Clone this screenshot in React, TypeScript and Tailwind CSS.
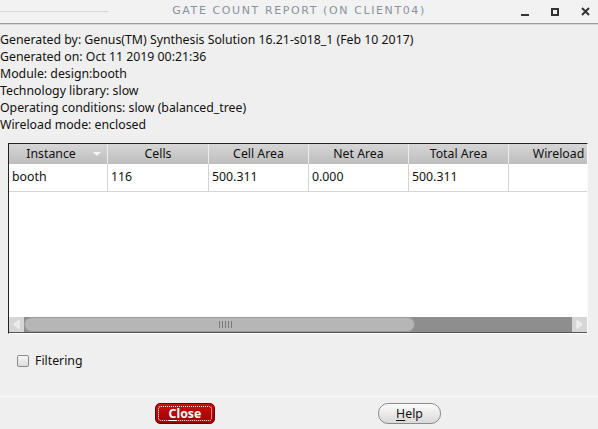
import React from "react";

// Gate count report dialog (Genus synthesis)
const info = [
  "Generated by: Genus(TM) Synthesis Solution 16.21-s018_1 (Feb 10 2017)",
  "Generated on: Oct 11 2019 00:21:36",
  "Module: design:booth",
  "Technology library: slow",
  "Operating conditions: slow (balanced_tree)",
  "Wireload mode: enclosed",
];

const columns = [
  { label: "Instance", w: "w-[99px]", sort: true },
  { label: "Cells", w: "w-[101px]" },
  { label: "Cell Area", w: "w-[100px]" },
  { label: "Net Area", w: "w-[100px]" },
  { label: "Total Area", w: "w-[100px]" },
  { label: "Wireload", w: "w-[100px]" },
];

const row = ["booth", "116", "500.311", "0.000", "500.311", ""];

export default function App() {
  return (
    <div className="flex h-[429px] w-[598px] flex-col overflow-hidden bg-[#efefef] text-[#111] [font-family:'Noto_Sans','Open_Sans',sans-serif]">
      {/* title bar */}
      <div className="grid h-[23px] shrink-0 grid-cols-[1fr_auto_1fr] items-center bg-[#f2f2f2]">
        <div className="flex">
          <div className="h-px w-[108px] bg-[#d6d6d6]" />
        </div>
        <div className="text-[11px] tracking-[1.6px] text-[#8a919c] [font-family:'DejaVu_Sans',sans-serif]">
          GATE COUNT REPORT (ON CLIENT04)
        </div>
        <div className="flex items-center justify-end gap-[22px] pr-[8px]">
          <div className="mt-[6px] h-[2px] w-[8px] bg-[#333]" />
          <div className="h-[8px] w-[8px] border-2 border-[#333]" />
          <svg width="9" height="9" viewBox="0 0 9 9">
            <path d="M1 1L8 8M8 1L1 8" stroke="#333" strokeWidth="2" />
          </svg>
        </div>
      </div>
      <div className="h-px shrink-0 bg-[#9c9c9c]" />
      <div className="h-px shrink-0 bg-[#d8d8d8]" />

      {/* header info */}
      <div className="pt-[6px] text-[12.3px] leading-[17px]">
        {info.map((t) => (
          <div key={t} className="whitespace-nowrap">
            {t}
          </div>
        ))}
      </div>

      {/* table */}
      <div className="ml-[8px] mt-[10px] flex h-[191px] w-[580px] flex-col border-b border-l border-r border-t border-b-white border-l-[#222] border-r-[#fafafa] border-t-[#222]">
        <div className="flex h-[20px] shrink-0 overflow-hidden bg-gradient-to-b from-[#d6d6d6] to-[#bdbdbd] text-[12.3px]">
          {columns.map((c) => (
            <div
              key={c.label}
              className={`${c.w} relative flex shrink-0 items-center justify-center border-r border-r-[#ececec] whitespace-nowrap`}
            >
              <span className={c.sort ? "-ml-[14px]" : ""}>{c.label}</span>
              {c.sort && (
                <svg className="absolute right-[6px] top-[8px]" width="8" height="4" viewBox="0 0 8 4">
                  <path d="M0 0H8L4 4Z" fill="#f4f4f4" />
                </svg>
              )}
            </div>
          ))}
        </div>
        <div className="flex-1 overflow-hidden bg-white">
          <div className="flex h-[28px] border-b border-[#d4d4d4] text-[12.3px]">
            {row.map((v, i) => (
              <div
                key={i}
                className={`${columns[i].w} flex shrink-0 items-center border-r border-[#d4d4d4] pl-[3px]`}
              >
                {v}
              </div>
            ))}
          </div>
        </div>
        {/* horizontal scrollbar */}
        <div className="flex h-[16px] shrink-0 border-b border-[#555] bg-[#8e8e8e]">
          <div className="flex w-[15px] items-center justify-center bg-[#d6d6d6]">
            <svg width="7" height="9" viewBox="0 0 7 9">
              <path d="M6 0.5L0.8 4.5L6 8.5Z" fill="#e8e8e8" stroke="#f6f6f6" />
            </svg>
          </div>
          <div className="relative flex w-[391px] items-center justify-center rounded-full border border-[#9a9a9a] bg-[#b6b6b6]">
            <div className="flex gap-[2px] pl-[12px]">
              {[0, 1, 2, 3, 4].map((k) => (
                <div key={k} className="h-[7px] w-px bg-[#7a7a7a]" />
              ))}
            </div>
          </div>
          <div className="flex-1" />
          <div className="flex w-[15px] items-center justify-center bg-[#d6d6d6]">
            <svg width="7" height="9" viewBox="0 0 7 9">
              <path d="M1 0.5L6.2 4.5L1 8.5Z" fill="#e8e8e8" stroke="#f6f6f6" />
            </svg>
          </div>
        </div>
      </div>

      {/* filtering */}
      <div className="mt-[18px] flex items-center gap-[6px] pl-[17px] text-[12.3px]">
        <div className="h-[12px] w-[12px] rounded-[2px] border border-[#8a8a8a] bg-gradient-to-b from-[#f6f6f6] to-[#dedede]" />
        <span>Filtering</span>
      </div>

      <div className="mt-[26px] h-px bg-[#fbfbfb]" />

      {/* buttons */}
      <div className="mt-[6px] flex items-center gap-[163px] pl-[155px]">
        <button className="flex h-[21px] w-[60px] items-center justify-center rounded-[5px] border border-[#6a0000] bg-gradient-to-b from-[#c81010] to-[#a00000] p-[2px]">
          <span className="flex h-full w-full items-center justify-center rounded-[3px] border border-dotted border-white text-[12.3px] font-bold text-white">
            <span className="underline underline-offset-2">C</span>lose
          </span>
        </button>
        <button className="flex h-[21px] w-[63px] items-center justify-center rounded-[10px] border border-[#8a8a8a] bg-gradient-to-b from-[#fbfbfb] to-[#d9d9d9] text-[12.3px]">
          <span className="underline underline-offset-2">H</span>elp
        </button>
      </div>
    </div>
  );
}
